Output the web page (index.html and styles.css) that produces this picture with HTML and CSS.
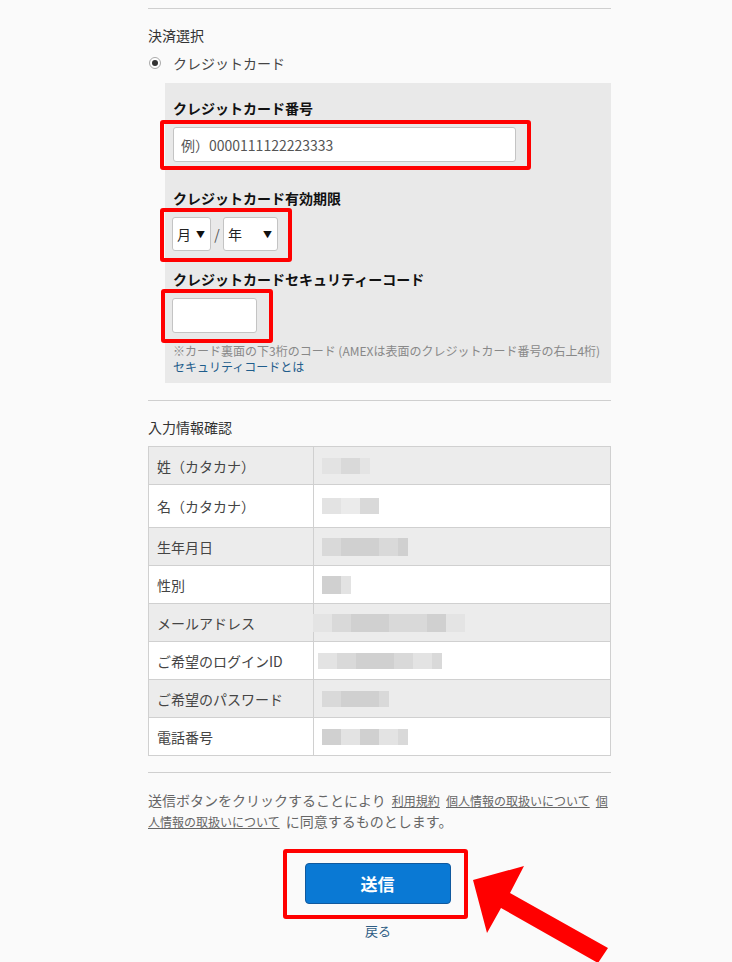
FILE: index.html
```html
<!DOCTYPE html>
<html lang="ja">
<head>
<meta charset="utf-8">
<title>決済選択</title>
<link rel="stylesheet" href="styles.css">
</head>
<body>
<div class="wrap">
  <hr class="rule rule-top">
  <h2 class="sec-title">決済選択</h2>
  <div class="radio-row"><span class="radio"></span><span>クレジットカード</span></div>

  <div class="panel">
    <div class="field-label first">クレジットカード番号</div>
    <div class="hl hl-card"><input class="text-input card-input" type="text" placeholder="例）0000111122223333"></div>

    <div class="field-label second">クレジットカード有効期限</div>
    <div class="hl hl-exp">
      <div class="sel sel-month"><span>月</span><span class="caret">▼</span></div>
      <span class="slash">/</span>
      <div class="sel sel-year"><span>年</span><span class="caret">▼</span></div>
    </div>

    <div class="field-label third">クレジットカードセキュリティーコード</div>
    <div class="hl hl-cvc"><input class="text-input cvc-input" type="text"></div>
    <p class="note">※カード裏面の下3桁のコード (AMEXは表面のクレジットカード番号の右上4桁)</p>
    <a class="note-link" href="#">セキュリティコードとは</a>
  </div>

  <hr class="rule rule-mid">
  <h2 class="sec-title sec-confirm">入力情報確認</h2>

  <table class="confirm">
    <tr class="odd">
      <th>姓（カタカナ）</th>
      <td><span class="blur"><i class="s3"></i><i class="s2"></i><i class="s4 part"></i></span></td>
    </tr>
    <tr class="even tall">
      <th>名（カタカナ）</th>
      <td><span class="blur"><i class="s3"></i><i class="s4"></i><i class="s2"></i></span></td>
    </tr>
    <tr class="odd">
      <th>生年月日</th>
      <td><span class="blur big"><i class="s2"></i><i class="s1"></i><i class="s1"></i><i class="s2"></i><i class="s1 part"></i></span></td>
    </tr>
    <tr class="even">
      <th>性別</th>
      <td><span class="blur big"><i class="s1"></i><i class="s3 part"></i></span></td>
    </tr>
    <tr class="odd">
      <th>メールアドレス</th>
      <td><span class="blur big shift"><i class="s4"></i><i class="s2"></i><i class="s1"></i><i class="s1"></i><i class="s2"></i><i class="s2"></i><i class="s1"></i><i class="s4"></i></span></td>
    </tr>
    <tr class="even">
      <th>ご希望のログインID</th>
      <td><span class="blur shift2"><i class="s3"></i><i class="s2"></i><i class="s1"></i><i class="s1"></i><i class="s2"></i><i class="s3"></i><i class="s2 part"></i></span></td>
    </tr>
    <tr class="odd">
      <th>ご希望のパスワード</th>
      <td><span class="blur"><i class="s2"></i><i class="s1"></i><i class="s1"></i><i class="s2 part"></i></span></td>
    </tr>
    <tr class="even">
      <th>電話番号</th>
      <td><span class="blur"><i class="s1"></i><i class="s3"></i><i class="s1"></i><i class="s3"></i><i class="s2 part"></i></span></td>
    </tr>
  </table>

  <hr class="rule rule-bottom">
  <p class="agree">送信ボタンをクリックすることにより <a href="#">利用規約</a> <a href="#">個人情報の取扱いについて</a> <a href="#">個人情報の取扱いについて</a> に同意するものとします。</p>

  <div class="actions">
    <div class="hl hl-btn"><button class="submit" type="button">送信</button></div>
    <a class="back" href="#">戻る</a>
  </div>
</div>

<svg class="arrow" width="732" height="962" viewBox="0 0 732 962" aria-hidden="true">
  <polygon points="473,880 524,866 510,893 608,948 598,963 501,908 487,933" fill="#ff0000"/>
</svg>
</body>
</html>
```

FILE: styles.css
```css
* { box-sizing: border-box; }

html, body {
  margin: 0;
  padding: 0;
}

body {
  background: #fafafa;
  color: #333;
  font-family: "Noto Sans CJK JP", "Noto Sans", sans-serif;
  font-size: 14px;
  position: relative;
  width: 732px;
  height: 962px;
  overflow: hidden;
}

.wrap {
  width: 463px;
  margin-left: 148px;
  padding-top: 8px;
}

.rule {
  border: 0;
  border-top: 1px solid #cfcfcf;
  margin: 0;
  height: 0;
}

.sec-title {
  font-size: 14px;
  font-weight: normal;
  line-height: 20px;
  margin: 16px 0 0;
  color: #333;
}

.radio-row {
  display: flex;
  align-items: center;
  height: 20px;
  margin-top: 8px;
  color: #444;
}

.radio {
  width: 12px;
  height: 12px;
  border-radius: 50%;
  border: 1px solid #aaa;
  background: #fff;
  margin-left: 1px;
  margin-right: 12px;
  position: relative;
  display: inline-block;
}

.radio::after {
  content: "";
  position: absolute;
  left: 2px;
  top: 2px;
  width: 6px;
  height: 6px;
  border-radius: 50%;
  background: #333;
}

.panel {
  background: #e9e9e9;
  margin: 10px 0 0 17px;
  width: 446px;
  padding: 0 8px 8px 8px;
}

.field-label {
  font-weight: bold;
  line-height: 20px;
  color: #111;
}

.field-label.first { padding-top: 15px; margin-bottom: 2px; }
.field-label.second { padding-top: 16px; }
.field-label.third { margin-top: 7px; }

.hl {
  border: 4px solid #ff0000;
  border-radius: 3px;
}

.hl-card {
  margin-left: -13px;
  width: 371px;
  padding: 3px 11px 4px 9px;
  margin-bottom: 2px;
}

.hl-exp {
  margin-left: -13px;
  width: 132px;
  padding: 5px 10px 7px 8px;
  display: flex;
  align-items: center;
}

.hl-cvc {
  margin-left: -12px;
  width: 112px;
  padding: 5px 12px 6px 7px;
}

.text-input {
  display: block;
  height: 35px;
  background: #fff;
  border: 1px solid #c4c4c4;
  border-radius: 3px;
  font-family: "Noto Sans CJK JP", "Noto Sans", sans-serif;
  font-size: 14px;
  color: #333;
  padding: 0 7px;
  margin: 0;
  outline: none;
}

.card-input { width: 343px; }
.cvc-input { width: 85px; }

.card-input::placeholder {
  color: #555;
  opacity: 1;
}

.sel {
  height: 34px;
  background: #fff;
  border: 1px solid #c4c4c4;
  border-radius: 3px;
  display: flex;
  align-items: center;
  justify-content: space-between;
  padding: 0 5px 0 4px;
  color: #222;
  font-size: 14px;
}

.sel-month { width: 39px; }
.sel-year { width: 55px; }

.caret {
  font-size: 9px;
  color: #111;
}

.slash {
  width: 12px;
  text-align: center;
  color: #555;
}

.note {
  margin: 0;
  font-size: 12px;
  line-height: 16px;
  color: #888;
  white-space: nowrap;
}

.note-link {
  display: block;
  font-size: 12px;
  line-height: 16px;
  color: #1f5d8c;
  text-decoration: none;
}

.rule-mid { margin-top: 17px; }

.sec-confirm { margin-top: 16px; }

.confirm {
  margin-top: 9px;
  width: 463px;
  border-collapse: collapse;
  border: 1px solid #d0d0d0;
  table-layout: fixed;
}

.confirm tr { height: 38px; }
.confirm tr.tall { height: 43px; }

.confirm tr.odd { background: #ececec; }
.confirm tr.even { background: #fff; }

.confirm th,
.confirm td {
  border: 1px solid #d0d0d0;
  padding: 0 0 0 8px;
  text-align: left;
  vertical-align: middle;
}

.confirm th {
  width: 165px;
  font-weight: normal;
  color: #444;
  font-size: 14px;
}

.blur {
  display: flex;
  height: 16px;
}

.blur.big { height: 18px; }
.blur.shift { margin-left: -9px; }
.blur.shift2 { margin-left: -4px; }

.blur i {
  display: block;
  width: 19px;
  height: 100%;
}

.blur i.part { width: 10px; }

.s1 { background: #d0d0d0; }
.s2 { background: #d9d9d9; }
.s3 { background: #e3e3e3; }
.s4 { background: #ebebeb; }

.odd .s4 { background: #e4e4e4; }

.rule-bottom { margin-top: 16px; }

.agree {
  margin: 17px 0 0;
  font-size: 14px;
  line-height: 21px;
  color: #666;
  word-spacing: 3px;
}

.agree a {
  font-size: 12px;
  color: #666;
  text-decoration: underline;
  word-spacing: 0;
}

.actions {
  display: flex;
  flex-direction: column;
  align-items: center;
  margin-top: 17px;
  padding-right: 9px;
}

.hl-btn {
  width: 185px;
  padding: 10px 13px 11px 18px;
}

.submit {
  display: block;
  width: 146px;
  height: 41px;
  background: #0a79d4;
  border: 1px solid #10599e;
  border-radius: 4px;
  color: #fff;
  font-family: "Noto Sans CJK JP", "Noto Sans", sans-serif;
  font-size: 17px;
  font-weight: bold;
  padding: 0;
}

.back {
  margin-top: 3px;
  margin-left: 6px;
  line-height: 18px;
  font-size: 13px;
  color: #2e5d85;
  text-decoration: none;
}

.arrow {
  position: absolute;
  left: 0;
  top: 0;
  pointer-events: none;
}
```
